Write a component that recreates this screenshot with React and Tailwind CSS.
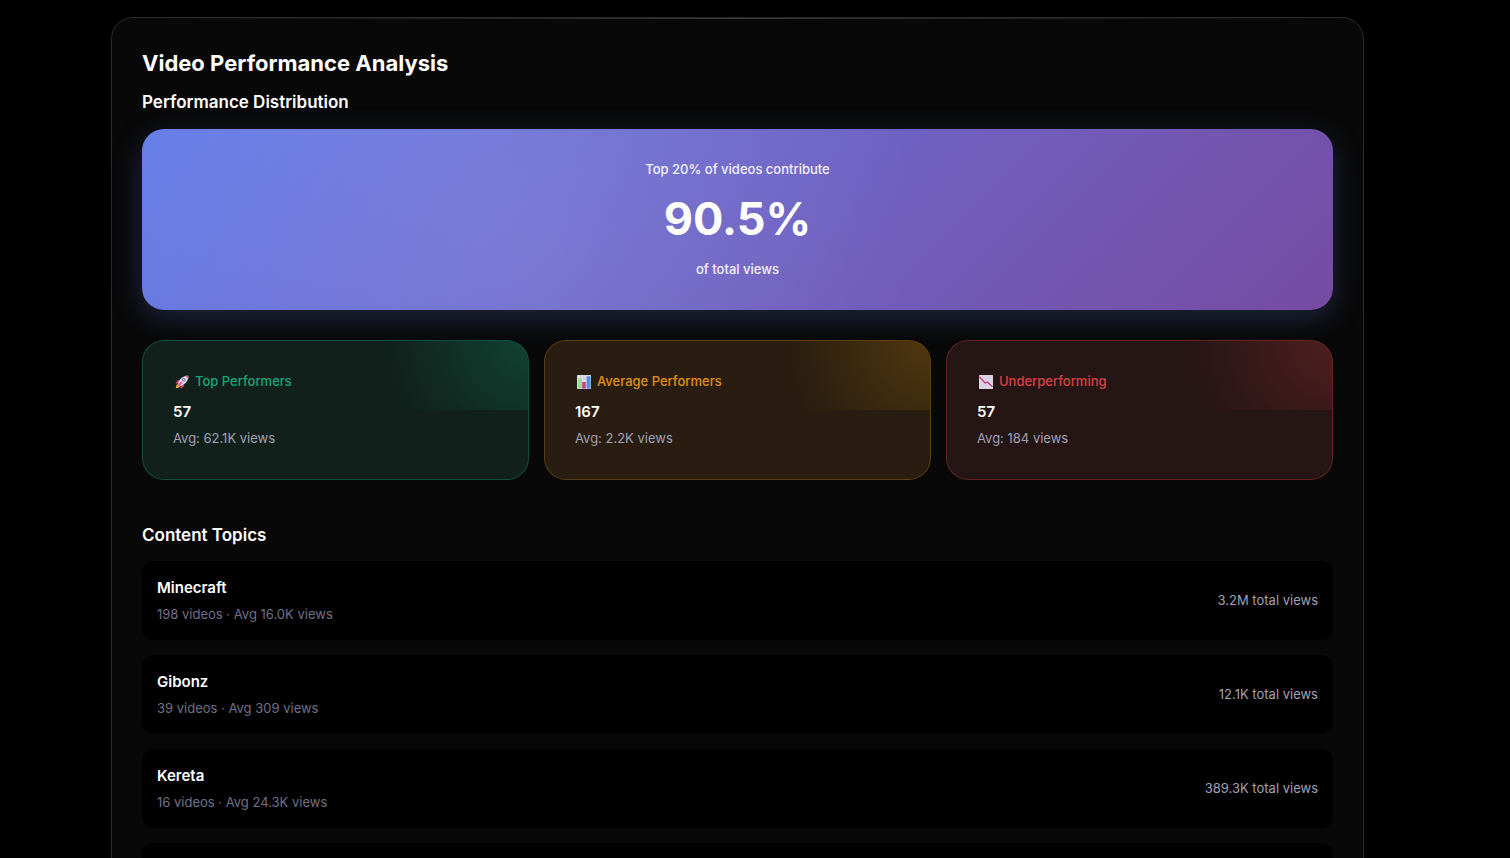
const performers = [
  {
    label: 'Top Performers',
    count: '57',
    average: 'Avg: 62.1K views',
    icon: RocketIcon,
    card: 'border-[#10b981]/30 bg-[#11201b]',
    glow: 'bg-[radial-gradient(circle_143px_at_100%_0,#10b98138,transparent)]',
    text: 'text-[#15a777]',
  },
  {
    label: 'Average Performers',
    count: '167',
    average: 'Avg: 2.2K views',
    icon: BarChartIcon,
    card: 'border-[#f59e0b]/25 bg-[#281d10]',
    glow: 'bg-[radial-gradient(circle_143px_at_100%_0,#f59e0b33,transparent)]',
    text: 'text-[#e08f15]',
  },
  {
    label: 'Underperforming',
    count: '57',
    average: 'Avg: 184 views',
    icon: DownChartIcon,
    card: 'border-[#ef4444]/30 bg-[#261515]',
    glow: 'bg-[radial-gradient(circle_143px_at_100%_0,#ef444433,transparent)]',
    text: 'text-[#dc4040]',
  },
];

const topics = [
  { name: 'Minecraft', detail: '198 videos · Avg 16.0K views', total: '3.2M total views' },
  { name: 'Gibonz', detail: '39 videos · Avg 309 views', total: '12.1K total views' },
  { name: 'Kereta', detail: '16 videos · Avg 24.3K views', total: '389.3K total views' },
];

function RocketIcon() {
  return (
    <svg viewBox="0 0 32 32" className="size-[14px]" aria-hidden="true">
      <path d="M12 10 5 13l-4 7 8-2zM21 21l-2 7-7 3 2-8z" fill="#e83f78" />
      <path d="M7 21c-4 0-5 4-5 9 5 0 9-1 9-5z" fill="#f6a33b" />
      <path d="M6 22C9 11 16 3 28 1l3 3c-2 12-10 19-21 22z" fill="#e4dcef" />
      <path d="m24 2 7-1-1 7z" fill="#f04d72" />
      <path d="m6 22 4 4 8-9-3-3z" fill="#ef5f8f" />
      <circle cx="20" cy="11" r="4" fill="#5a6b98" />
      <circle cx="20" cy="11" r="2" fill="#b4d5f2" />
    </svg>
  );
}

function BarChartIcon() {
  return (
    <svg viewBox="0 0 32 32" className="size-[14px]" aria-hidden="true">
      <rect width="32" height="32" rx="2" fill="#e1dbe8" />
      <path d="M0 8h32M0 16h32M0 24h32M8 0v32M16 0v32M24 0v32" stroke="#c5bdd0" />
      <rect x="2" y="8" width="9" height="23" fill="#9ddb8c" />
      <rect x="12" y="16" width="8" height="15" fill="#c63f7b" />
      <rect x="22" y="3" width="9" height="28" fill="#4c94da" />
    </svg>
  );
}

function DownChartIcon() {
  return (
    <svg viewBox="0 0 32 32" className="size-[14px]" aria-hidden="true">
      <rect width="32" height="32" rx="2" fill="#ddd5e7" />
      <path d="M0 8h32M0 16h32M0 24h32M8 0v32M16 0v32M24 0v32" stroke="#cdc4d8" />
      <path d="m1 4 13 14 5-2 12 11" fill="none" stroke="#ce397c" strokeWidth="3" />
    </svg>
  );
}

function PerformerCard({ item }) {
  const Icon = item.icon;
  return (
    <article className={`relative overflow-hidden rounded-[22px] border px-[30px] pt-[31px] pb-[31px] ${item.card}`}>
      <div className={`absolute top-0 right-0 h-1/2 w-1/2 ${item.glow}`} />
      <h3 className={`relative flex h-5 items-center gap-[6px] pl-[2px] text-[13px] font-medium ${item.text}`}>
        <Icon />
        {item.label}
      </h3>
      <p className="relative mt-2 text-[15px] leading-6 font-semibold">{item.count}</p>
      <p className="relative mt-1 text-[13px] leading-5 text-[#a1a1b5]">{item.average}</p>
    </article>
  );
}

function TopicRow({ topic }) {
  return (
    <li className="flex items-center justify-between gap-4 rounded-xl bg-black px-[15px] pt-[15px] pb-4">
      <div>
        <h3 className="text-[15px] leading-6 font-semibold">{topic.name}</h3>
        <p className="mt-1 text-[13px] leading-5 text-[#717087]">{topic.detail}</p>
      </div>
      <p className="text-[13px] leading-5 text-[#a1a1b5]">{topic.total}</p>
    </li>
  );
}

export default function App() {
  return (
    <div className="h-screen overflow-hidden bg-black pt-[17px] pr-[146px] pl-[111px] font-['Inter',sans-serif] text-white">
      <main className="relative min-h-screen rounded-[22px] border border-[#2a2a2a] bg-[#080808] px-[30px] pt-[30px] pb-[30px]">
        <div className="absolute inset-x-0 top-0 h-px bg-linear-to-r from-transparent via-white/20 to-transparent" />
        <h1 className="text-[22px] leading-[30px] font-bold">Video Performance Analysis</h1>

        <section className="mt-3">
          <h2 className="text-[17px] leading-6 font-semibold">Performance Distribution</h2>
          <div className="mt-[15px] flex flex-col items-center rounded-[22px] bg-[radial-gradient(circle_at_30%_50%,#ffffff1a,transparent_50%),linear-gradient(135deg,#667eea_0%,#764ba2_100%)] pt-[30px] pb-[31px] shadow-[0_8px_30px_#667eea40]">
            <p className="text-[13px] leading-5 font-medium text-white/90">Top 20% of videos contribute</p>
            <p className="my-[10px] text-[45px] leading-[60px] font-bold">90.5%</p>
            <p className="text-[13px] leading-5 font-medium text-white/90">of total views</p>
          </div>
          <div className="mt-[30px] grid grid-cols-3 gap-[15px]">
            {performers.map((item) => (
              <PerformerCard key={item.label} item={item} />
            ))}
          </div>
        </section>

        <section className="mt-[43px]">
          <h2 className="text-[17px] leading-6 font-semibold">Content Topics</h2>
          <ul className="mt-[14px] flex flex-col gap-[15px]">
            {topics.map((topic) => (
              <TopicRow key={topic.name} topic={topic} />
            ))}
            <li className="min-h-[79px] rounded-xl bg-black" />
          </ul>
        </section>
      </main>
    </div>
  );
}
